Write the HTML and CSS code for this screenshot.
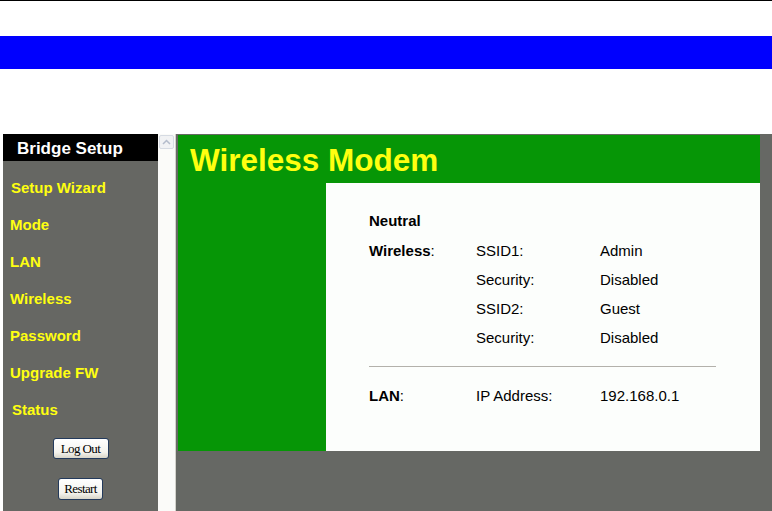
FILE: index.html
```html
<!DOCTYPE html>
<html lang="en">
<head>
    <meta charset="UTF-8">
    <title>Wireless Modem</title>
    <link rel="stylesheet" href="styles.css">
</head>
<body>
    <div class="topline"></div>
    <div class="banner"></div>
    <div class="shot">
        <div class="sidebar">
            <div class="side-head">Bridge Setup</div>
            <ul class="menu">
                <li class="m1">Setup Wizard</li>
                <li>Mode</li>
                <li>LAN</li>
                <li>Wireless</li>
                <li>Password</li>
                <li>Upgrade FW</li>
                <li class="m7">Status</li>
            </ul>
            <div class="btns">
                <button class="btn btn-logout">Log Out</button>
                <button class="btn btn-restart">Restart</button>
            </div>
        </div>
        <div class="scroll">
            <div class="scroll-up">
                <svg width="9" height="6" viewBox="0 0 9 6"><path d="M1 5 L4.5 1.5 L8 5" fill="none" stroke="#b4bccb" stroke-width="1.5"/></svg>
            </div>
        </div>
        <div class="main">
            <div class="modem">
                <h1 class="modem-title">Wireless Modem</h1>
                <div class="modem-body">
                    <div class="modem-left"></div>
                    <div class="panel">
                        <div class="row first"><b>Neutral</b></div>
                        <div class="row"><span><b>Wireless</b>:</span><span>SSID1:</span><span>Admin</span></div>
                        <div class="row"><span></span><span>Security:</span><span>Disabled</span></div>
                        <div class="row"><span></span><span>SSID2:</span><span>Guest</span></div>
                        <div class="row"><span></span><span>Security:</span><span>Disabled</span></div>
                        <div class="row sep"><hr></div>
                        <div class="row"><span><b>LAN</b>:</span><span>IP Address:</span><span>192.168.0.1</span></div>
                    </div>
                </div>
            </div>
        </div>
    </div>
</body>
</html>
```

FILE: styles.css
```css
*{margin:0;padding:0;box-sizing:border-box;}
html,body{
    width: 772px;
    height: 511px;
    overflow: hidden;
    background-color: #fff;
}
.topline{
    height: 1px;
    background-color: #000;
}
.banner{
    margin-top: 35px;
    height: 33px;
    background-color: #0000fe;
}
.shot{
    display: flex;
    margin: 65px 0 0 3px;
    height: 377px;
    font-family: "Liberation Sans", Arial, sans-serif;
}
.sidebar{
    width: 155px;
    background-color: #666763;
}
.side-head{
    height: 27px;
    line-height: 29px;
    background-color: #000;
    color: #fff;
    font-size: 17px;
    font-weight: bold;
    padding-left: 14px;
}
.menu{
    list-style: none;
    padding: 8px 0 0 7px;
}
.menu li{
    height: 37px;
    line-height: 37px;
    font-size: 15px;
    font-weight: bold;
    color: #ffff10;
}
.menu .m1{padding-left: 1px;}
.menu .m7{padding-left: 2px;}
.btns{
    display: flex;
    flex-direction: column;
    align-items: center;
    gap: 19px;
    padding-top: 10px;
}
.btn{
    font-family: "Liberation Serif", "Times New Roman", serif;
    font-size: 13px;
    letter-spacing: -0.6px;
    color: #000;
    border: 1px solid #233a5c;
    border-radius: 3px;
    background: linear-gradient(#ffffff, #f4f3ee 70%, #d8d5c8);
}
.btn-logout{
    width: 56px;
    height: 21px;
}
.btn-restart{
    width: 45px;
    height: 22px;
}
.scroll{
    width: 18px;
    background-color: #fbfbf9;
    border-right: 1px solid #d2d2cc;
}
.scroll-up{
    margin: 1px 0 0 1px;
    width: 15px;
    height: 14px;
    border: 1px solid #d6dbe3;
    border-radius: 2px;
    background-color: #f1f2f4;
    display: flex;
    align-items: center;
    justify-content: center;
}
.main{
    flex: 1;
    background-color: #666864;
    padding: 1px 12px 0 2px;
}
.modem{
    background-color: #069606;
}
.modem-title{
    height: 48px;
    line-height: 50px;
    padding-left: 12px;
    font-size: 31.5px;
    font-weight: bold;
    color: #ffff10;
}
.modem-body{
    display: flex;
}
.modem-left{
    width: 148px;
}
.panel{
    flex: 1;
    height: 268px;
    background-color: #fcfefc;
    padding: 23px 0 0 43px;
    font-size: 15px;
    color: #000;
}
.row{
    display: grid;
    grid-template-columns: 107px 124px auto;
    height: 29px;
    line-height: 29px;
}
.row.first{
    height: 30px;
    line-height: 30px;
}
.row.sep{
    display: flex;
    align-items: center;
}
.row.sep hr{
    width: 347px;
    border: none;
    border-top: 1px solid #b3b1ab;
}
```
